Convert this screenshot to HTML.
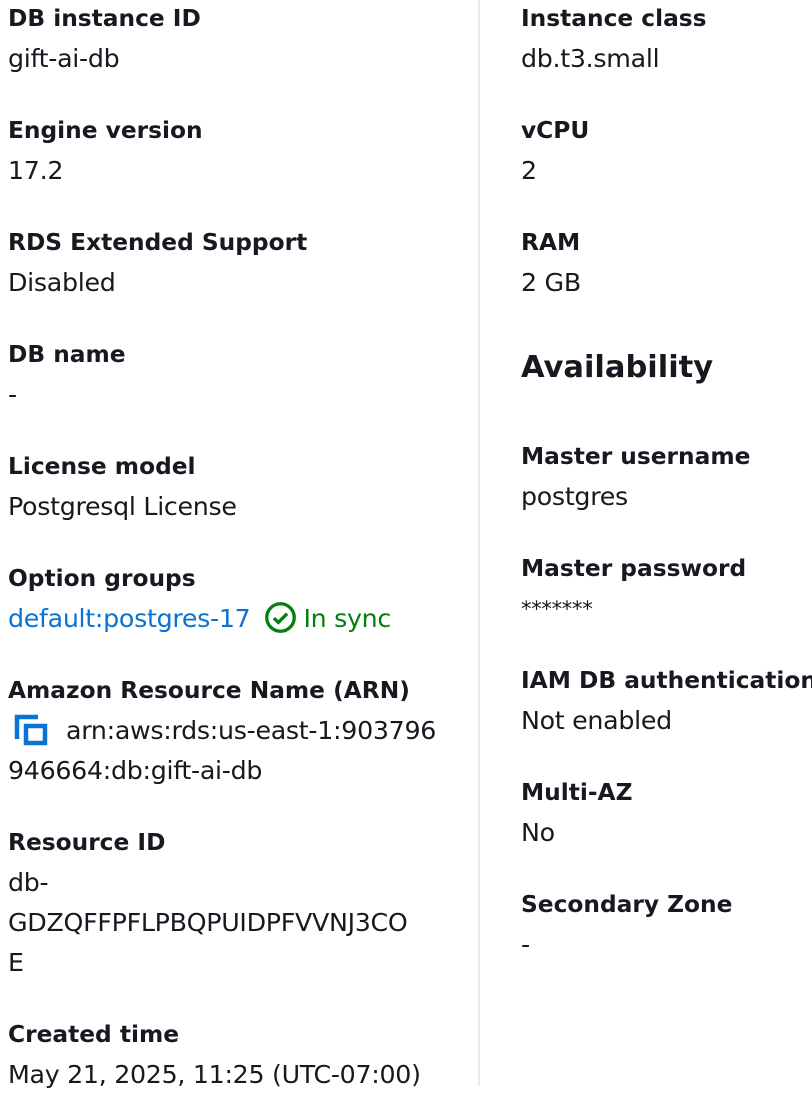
<!DOCTYPE html>
<html><head><meta charset="utf-8"><style>
body{margin:0;width:812px;height:1086px;overflow:hidden;background:#fff;font-family:"DejaVu Sans","Liberation Sans",sans-serif;color:#16191f;position:relative}
.d{position:absolute;white-space:nowrap;line-height:40px}
.l{font-weight:bold;font-size:23.3px}
.v{font-size:25.3px;letter-spacing:-0.3px}
.sep{position:absolute;left:478px;top:0;width:2px;height:1086px;background:#e9ebed}
a{color:#0972d3;text-decoration:none}
.g{color:#037f0c}
h2{position:absolute;left:521px;top:347px;margin:0;font-size:30.5px;line-height:42px;font-weight:bold}
</style></head><body>
<div class="sep"></div>
<div class="d" style="left:8px;top:-1px"><div class="l">DB instance ID</div><div class="v">gift-ai-db</div></div>
<div class="d" style="left:8px;top:111px"><div class="l">Engine version</div><div class="v">17.2</div></div>
<div class="d" style="left:8px;top:223px"><div class="l">RDS Extended Support</div><div class="v">Disabled</div></div>
<div class="d" style="left:8px;top:335px"><div class="l">DB name</div><div class="v">-</div></div>
<div class="d" style="left:8px;top:447px"><div class="l">License model</div><div class="v">Postgresql License</div></div>
<div class="d" style="left:8px;top:559px"><div class="l">Option groups</div><div class="v"><a>default:postgres-17</a><svg width="33" height="33" viewBox="0 0 30 30" style="vertical-align:-7px;margin-left:14px;margin-right:6px"><circle cx="15" cy="15" r="12.5" fill="none" stroke="#037f0c" stroke-width="3"/><path d="M9 15.5l4 4 8-8" fill="none" stroke="#037f0c" stroke-width="3"/></svg><span class="g">In sync</span></div></div>
<div class="d" style="left:8px;top:671px"><div class="l">Amazon Resource Name (ARN)</div><div class="v"><svg width="34" height="32" viewBox="0 0 34 32" style="vertical-align:-7px;margin-left:6px;margin-right:18px"><path d="M3 25V3h21" fill="none" stroke="#0972d3" stroke-width="4.5"/><rect x="12" y="12" width="19" height="17" fill="none" stroke="#0972d3" stroke-width="4.5"/></svg>arn:aws:rds:us-east-1:903796<br>946664:db:gift-ai-db</div></div>
<div class="d" style="left:8px;top:823px"><div class="l">Resource ID</div><div class="v">db-<br>GDZQFFPFLPBQPUIDPFVVNJ3CO<br>E</div></div>
<div class="d" style="left:8px;top:1015px"><div class="l">Created time</div><div class="v">May 21, 2025, 11:25 (UTC-07:00)</div></div>

<div class="d" style="left:521px;top:-1px"><div class="l">Instance class</div><div class="v">db.t3.small</div></div>
<div class="d" style="left:521px;top:111px"><div class="l">vCPU</div><div class="v">2</div></div>
<div class="d" style="left:521px;top:223px"><div class="l">RAM</div><div class="v">2 GB</div></div>
<h2>Availability</h2>
<div class="d" style="left:521px;top:437px"><div class="l">Master username</div><div class="v">postgres</div></div>
<div class="d" style="left:521px;top:549px"><div class="l">Master password</div><div class="v" style="font-size:21px">*******</div></div>
<div class="d" style="left:521px;top:661px"><div class="l">IAM DB authentication</div><div class="v">Not enabled</div></div>
<div class="d" style="left:521px;top:773px"><div class="l">Multi-AZ</div><div class="v">No</div></div>
<div class="d" style="left:521px;top:885px"><div class="l">Secondary Zone</div><div class="v">-</div></div>
</body></html>
